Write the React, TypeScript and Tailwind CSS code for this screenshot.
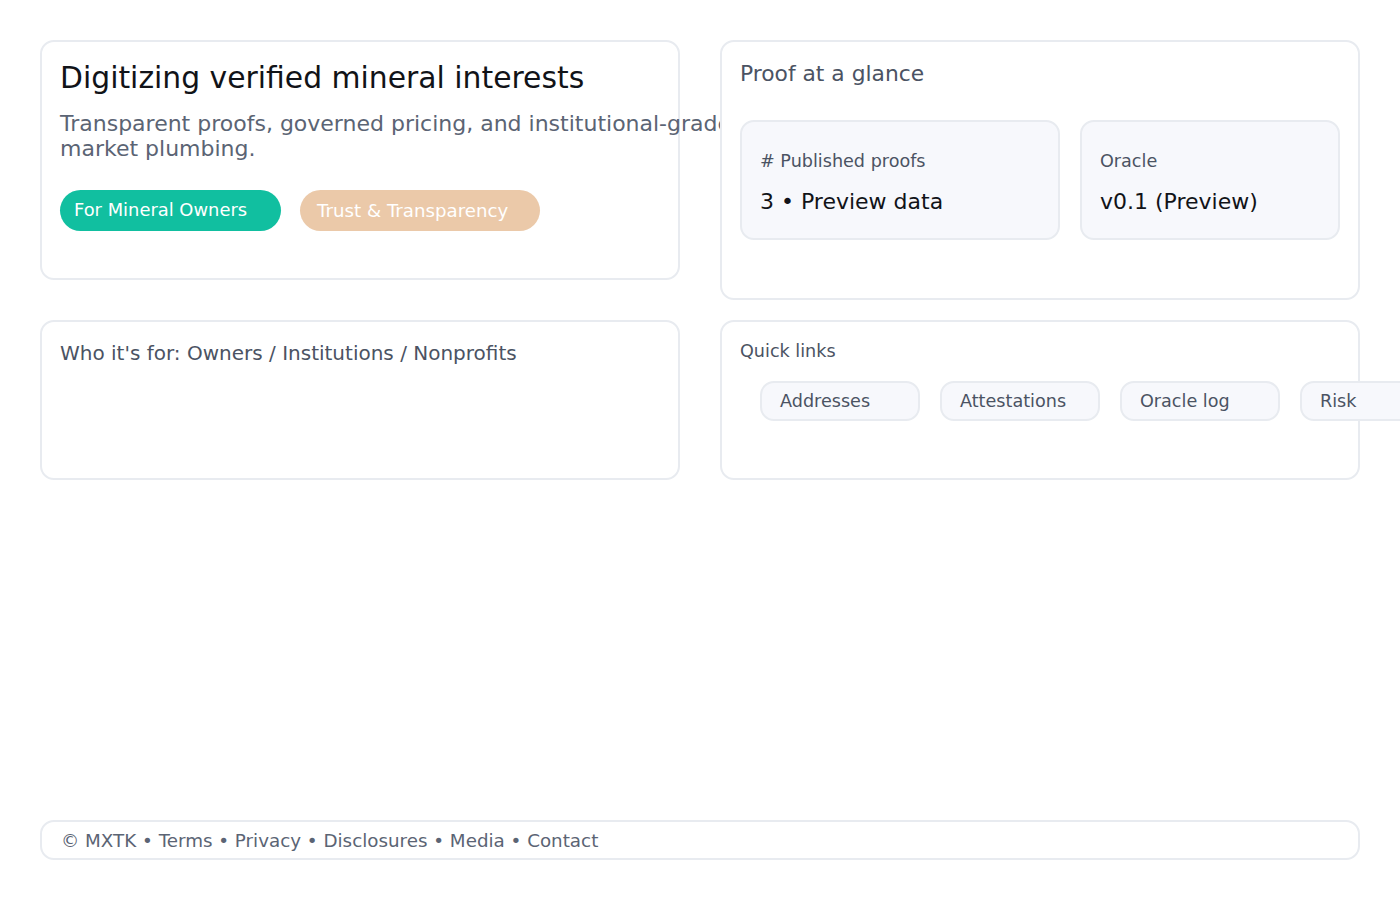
import React from 'react';

const font = { fontFamily: '"DejaVu Sans", sans-serif' };

const Card: React.FC<{ className?: string; children: React.ReactNode }> = ({ className = '', children }) => (
  <div className={`bg-white border-2 border-[#e8ebf0] rounded-[14px] ${className}`}>{children}</div>
);

export default function App() {
  const quickLinks = ['Addresses', 'Attestations', 'Oracle log', 'Risk'];

  return (
    <div className="min-h-[900px] flex flex-col p-10 bg-white" style={font}>
      <main className="flex-1">
        <div className="grid grid-cols-2 gap-x-10 gap-y-5 items-start">
          {/* Hero */}
          <Card className="h-[240px] px-[18px] pt-[16px]">
            <h1 className="text-[29.8px] leading-[40px] text-[#111318]">Digitizing verified mineral interests</h1>
            <p className="w-[700px] mt-[13px] text-[22px] leading-[25px] text-[#5b6474]">
              Transparent proofs, governed pricing, and institutional-grade market plumbing.
            </p>
            <div className="flex gap-[19px] mt-[29px]">
              <span className="h-[41px] flex items-center pl-[14px] pr-[34px] rounded-full bg-[#11bfa0] text-white text-[17.9px]">
                For Mineral Owners
              </span>
              <span className="h-[41px] flex items-center pl-[17px] pr-[32px] rounded-full bg-[#ebc9a9] text-white text-[18.2px]">
                Trust &amp; Transparency
              </span>
            </div>
          </Card>

          {/* Proof at a glance */}
          <Card className="relative h-[260px] px-[18px] pt-[17px]">
            <h2 className="text-[21.8px] leading-[30px] text-[#4b5363]">Proof at a glance</h2>
            <div className="flex gap-5 mt-[31px]">
              <div className="w-[320px] h-[120px] bg-[#f7f8fc] border-2 border-[#e8ebf0] rounded-[14px] px-[18px] pt-[27px]">
                <div className="text-[17.6px] leading-[24px] text-[#4b5363]"># Published proofs</div>
                <div className="mt-[16px] text-[22px] leading-[26px] text-[#111318]">3 • Preview data</div>
              </div>
              <div className="flex-1 h-[120px] bg-[#f7f8fc] border-2 border-[#e8ebf0] rounded-[14px] px-[18px] pt-[27px]">
                <div className="text-[17.6px] leading-[24px] text-[#4b5363]">Oracle</div>
                <div className="mt-[16px] text-[22px] leading-[26px] text-[#111318]">v0.1 (Preview)</div>
              </div>
            </div>
          </Card>

          {/* Who it's for */}
          <Card className="h-[160px] px-[18px] pt-[18px]">
            <p className="text-[20px] leading-[26px] text-[#4b5363]">Who it's for: Owners / Institutions / Nonprofits</p>
          </Card>

          {/* Quick links */}
          <Card className="relative h-[160px] px-[18px] pt-[17px]">
            <h3 className="text-[17.6px] leading-[24px] text-[#4b5363]">Quick links</h3>
            <div className="flex gap-5 mt-[18px] ml-5">
              {quickLinks.map((l) => (
                <span
                  key={l}
                  className="shrink-0 w-[160px] h-[40px] flex items-center px-[18px] bg-[#f7f8fc] border-2 border-[#e8ebf0] rounded-[14px] text-[17.6px] text-[#4b5363]"
                >
                  {l}
                </span>
              ))}
            </div>
          </Card>
        </div>
      </main>

      <footer className="h-[40px] flex items-center px-[19px] pt-[2px] border-2 border-[#e8ebf0] rounded-[14px] text-[18.3px] leading-[24px] text-[#5b6474]">
        © MXTK • Terms • Privacy • Disclosures • Media • Contact
      </footer>
    </div>
  );
}
